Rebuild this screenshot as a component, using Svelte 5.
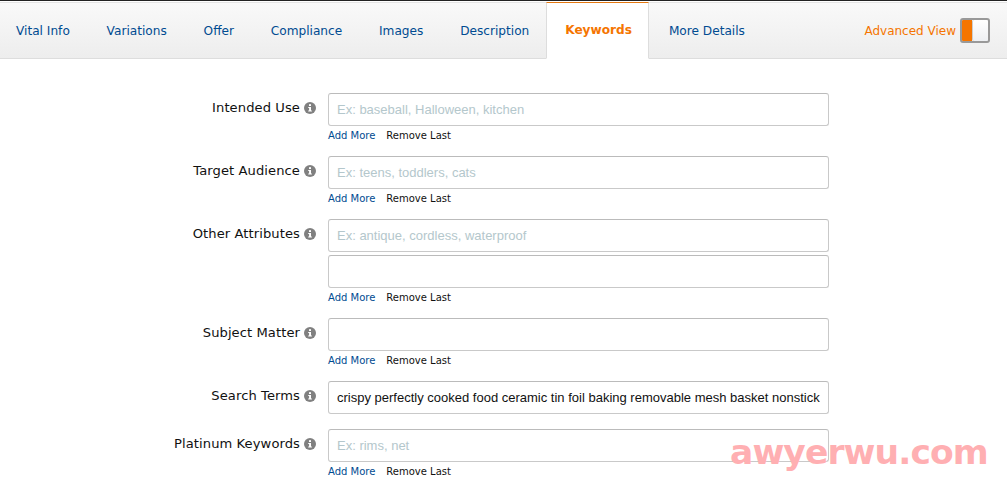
<script>
  const tabs = ['Vital Info', 'Variations', 'Offer', 'Compliance', 'Images', 'Description', 'Keywords', 'More Details'];
  const rows = [
    { label: 'Intended Use', fields: [{ ph: 'Ex: baseball, Halloween, kitchen' }], links: true },
    { label: 'Target Audience', fields: [{ ph: 'Ex: teens, toddlers, cats' }], links: true },
    { label: 'Other Attributes', fields: [{ ph: 'Ex: antique, cordless, waterproof' }, { ph: '' }], links: true },
    { label: 'Subject Matter', fields: [{ ph: '' }], links: true },
    { label: 'Search Terms', fields: [{ val: 'crispy perfectly cooked food ceramic tin foil baking removable mesh basket nonstick' }], links: false },
    { label: 'Platinum Keywords', fields: [{ ph: 'Ex: rims, net' }], links: true }
  ];
</script>

<div class="page">
  <nav class="tabbar">
    {#each tabs as t}
      <a class="tab" class:active={t === 'Keywords'} href="#top">{t}</a>
    {/each}
    <div class="adv">
      <span>Advanced View</span>
      <span class="toggle"><span class="on"></span><span class="knob"></span></span>
    </div>
  </nav>
  <main class="form">
    {#each rows as r}
      <div class="row" class:nolinks={!r.links}>
        <div class="label">
          <span>{r.label}</span>
          <svg class="info" width="12" height="12" viewBox="0 0 12 12">
            <circle cx="6" cy="6" r="6" fill="#808080" />
            <rect x="5" y="2.2" width="2" height="1.8" fill="#fff" />
            <path d="M4.2 5h2.8v3.4h.9v1H4.2v-1h.9V6h-.9z" fill="#fff" />
          </svg>
        </div>
        <div class="fields">
          {#each r.fields as f}
            <input type="text" placeholder={f.ph} value={f.val ?? ''} />
          {/each}
          {#if r.links}
            <div class="links"><a href="#top">Add More</a><span>Remove Last</span></div>
          {/if}
        </div>
      </div>
    {/each}
  </main>
  <div class="mark">awyerwu.com</div>
</div>

<style>
  :global(body) { margin: 0; background: #fff; }
  .page {
    position: relative;
    height: 485px;
    overflow: hidden;
    font-family: "DejaVu Sans", Verdana, sans-serif;
    border-top: 1px solid #222;
    box-sizing: border-box;
    background: #fff;
  }
  .tabbar {
    display: flex;
    align-items: stretch;
    height: 57px;
    margin-top: 1px;
    box-sizing: border-box;
    background: linear-gradient(#f9f9f9, #ededed);
    border-bottom: 1px solid #ddd;
    border-top: 1px solid #e4e4e4;
  }
  .tab {
    display: flex;
    align-items: center;
    padding: 0 18.4px 1px;
    font-size: 12.15px;
    color: #004b91;
    text-decoration: none;
    margin-bottom: -1px;
  }
  .tab:first-child { padding-left: 16px; }
  .tab.active {
    padding: 0 16px 1px 18px;
    background: #fff;
    color: #f57500;
    font-weight: bold;
    border: 1px solid #ddd;
    border-top: 1px solid #e47911;
    border-bottom: 1px solid #fff;
    margin: -1px 1.5px -1px -1.5px;
  }
  .adv {
    margin-left: auto;
    margin-right: 17px;
    display: flex;
    align-items: center;
    gap: 4px;
    font-size: 12px;
    color: #f57500;
  }
  .toggle {
    display: flex;
    width: 30px;
    height: 25px;
    box-sizing: border-box;
    border: 2px solid #999;
    border-radius: 3px;
    overflow: hidden;
  }
  .on { width: 10px; background: #f57500; }
  .knob { flex: 1; background: linear-gradient(#fff, #eef0f3); border-left: 1px solid #ccc; border-radius: 2px; }
  .form { padding-top: 34px; }
  .row {
    display: grid;
    grid-template-columns: 316px 501px;
    column-gap: 12px;
    margin-bottom: 10px;
  }
  .row.nolinks { margin-bottom: 15px; }
  .label {
    display: flex;
    justify-content: flex-end;
    align-items: center;
    gap: 4px;
    height: 29px;
    font-size: 13.1px;
    letter-spacing: 0.08px;
    color: #111;
  }
  .fields { display: flex; flex-direction: column; gap: 3px; }
  input {
    display: block;
    box-sizing: border-box;
    width: 501px;
    height: 33px;
    padding: 0 8px;
    margin: 0;
    border: 1px solid #c9c9c9;
    border-top-color: #bbb;
    border-radius: 3px;
    background: #fff;
    outline: none;
    font-family: "Liberation Sans", Arial, sans-serif;
    font-size: 13px;
    color: #111;
  }
  input::placeholder { color: #b4c7cc; opacity: 1; }
  .links {
    display: flex;
    gap: 11px;
    height: 17px;
    line-height: 14px;
    font-size: 10px;
    color: #111;
  }
  .links a { color: #004b91; text-decoration: none; }
  .mark {
    position: absolute;
    left: 730px;
    top: 429px;
    font-family: "DejaVu Sans", sans-serif;
    font-weight: bold;
    font-size: 34.5px;
    line-height: 44px;
    color: #ffafb2;
    white-space: nowrap;
    letter-spacing: -0.9px;
  }
</style>
